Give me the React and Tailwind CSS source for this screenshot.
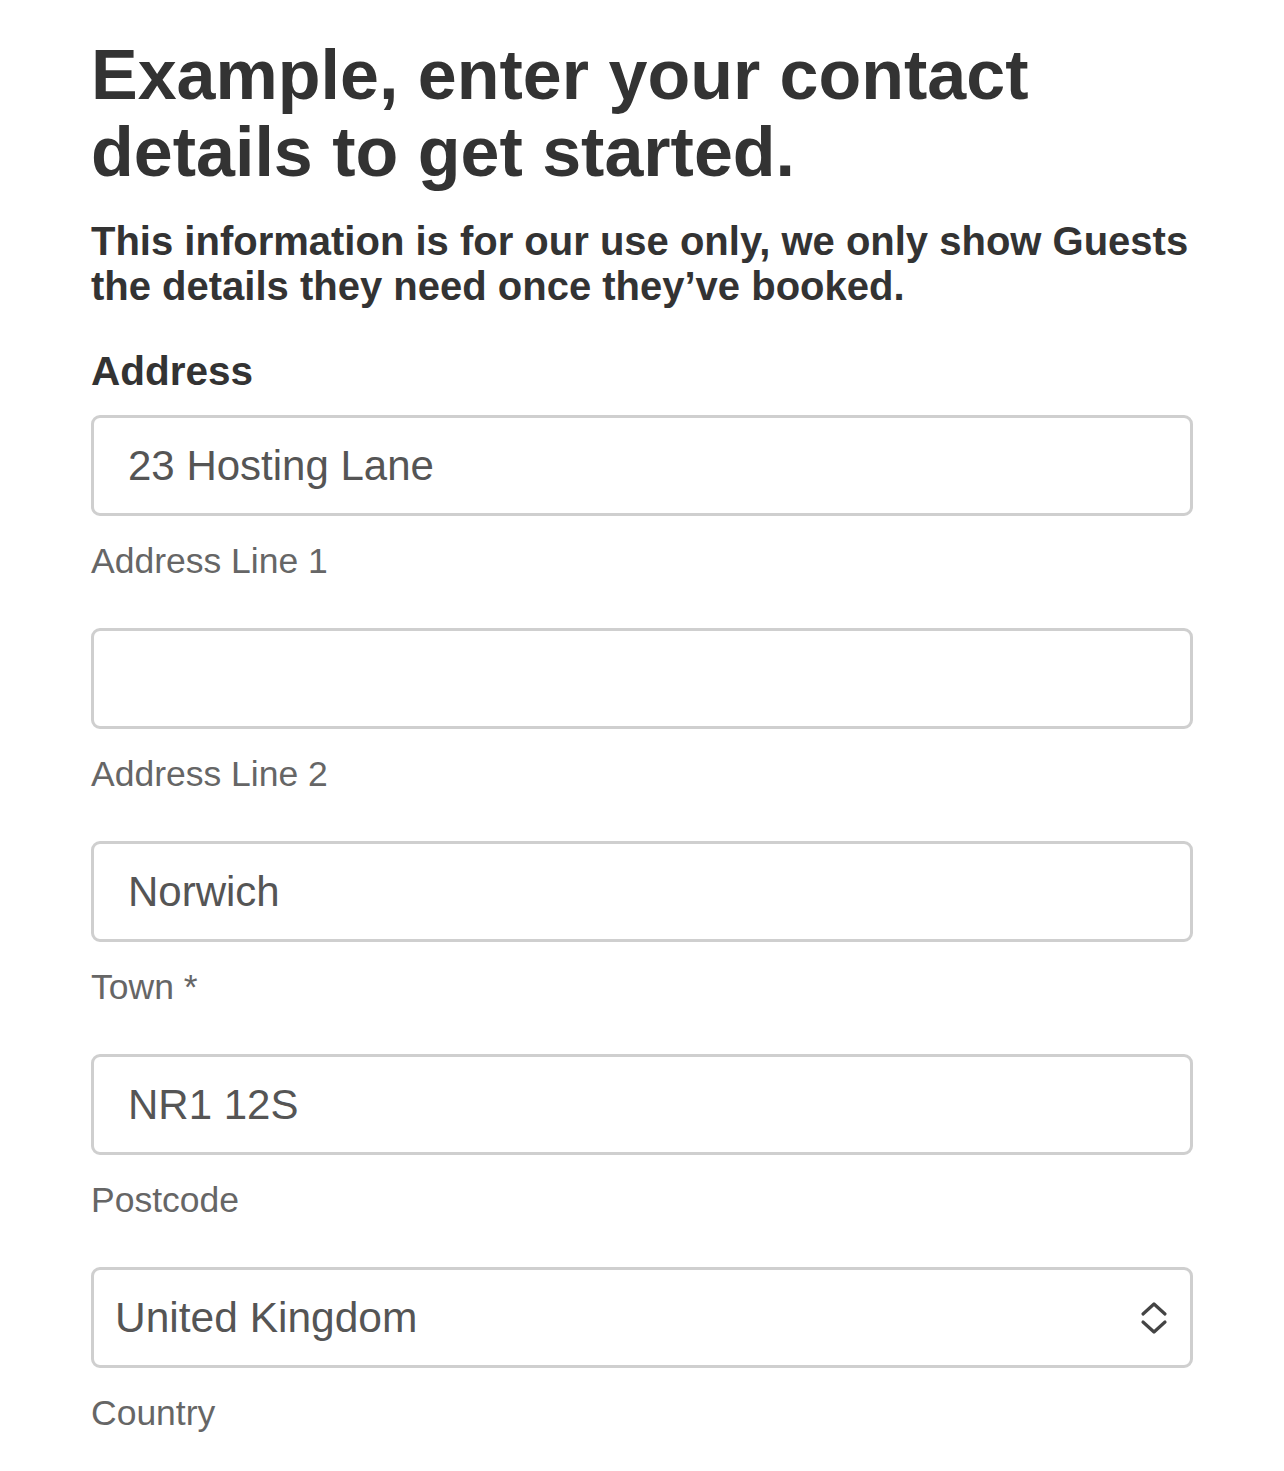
const FIELDS = [
  { value: "23 Hosting Lane", label: "Address Line 1" },
  { value: "", label: "Address Line 2" },
  { value: "Norwich", label: "Town *" },
  { value: "NR1 12S", label: "Postcode" },
];

function Field({ value, label }) {
  return (
    <div>
      <div className="h-[101px] rounded-[9px] border-[3px] border-[#cfcfcf] bg-white flex items-center pl-[34px] text-[42px] text-[#555]">
        {value}
      </div>
      <p className="mt-[25px] mb-[47px] text-[35.5px] leading-[40px] text-[#666]">{label}</p>
    </div>
  );
}

function UpDown() {
  return (
    <svg width="30" height="34" viewBox="0 0 30 34" fill="none" stroke="#444" strokeWidth="3.2" strokeLinecap="round" strokeLinejoin="round">
      <path d="M4 13 L15 3 L26 13" />
      <path d="M4 21 L15 31 L26 21" />
    </svg>
  );
}

export default function App() {
  return (
    <div className="min-h-screen bg-white font-['Liberation_Sans',Arial,sans-serif] text-[#333]">
      <main className="w-[1102px] ml-[91px] pt-[37px]">
        <h1 className="text-[70px] leading-[77px] font-bold max-w-[1000px]">
          Example, enter your contact details to get started.
        </h1>
        <p className="mt-[28px] text-[40px] leading-[45px] font-bold">
          This information is for our use only, we only show Guests the details they need once they’ve booked.
        </p>
        <h2 className="mt-[40px] text-[40.5px] leading-[45px] font-bold">Address</h2>
        <div className="mt-[21px]">
          {FIELDS.map((f) => (
            <Field key={f.label} value={f.value} label={f.label} />
          ))}
          <div>
            <div className="h-[101px] rounded-[9px] border-[3px] border-[#cfcfcf] bg-white flex items-center justify-between pl-[21px] pr-[21px] text-[42.5px] text-[#555]">
              <span>United Kingdom</span>
              <UpDown />
            </div>
            <p className="mt-[25px] text-[35.5px] leading-[40px] text-[#666]">Country</p>
          </div>
        </div>
      </main>
    </div>
  );
}
